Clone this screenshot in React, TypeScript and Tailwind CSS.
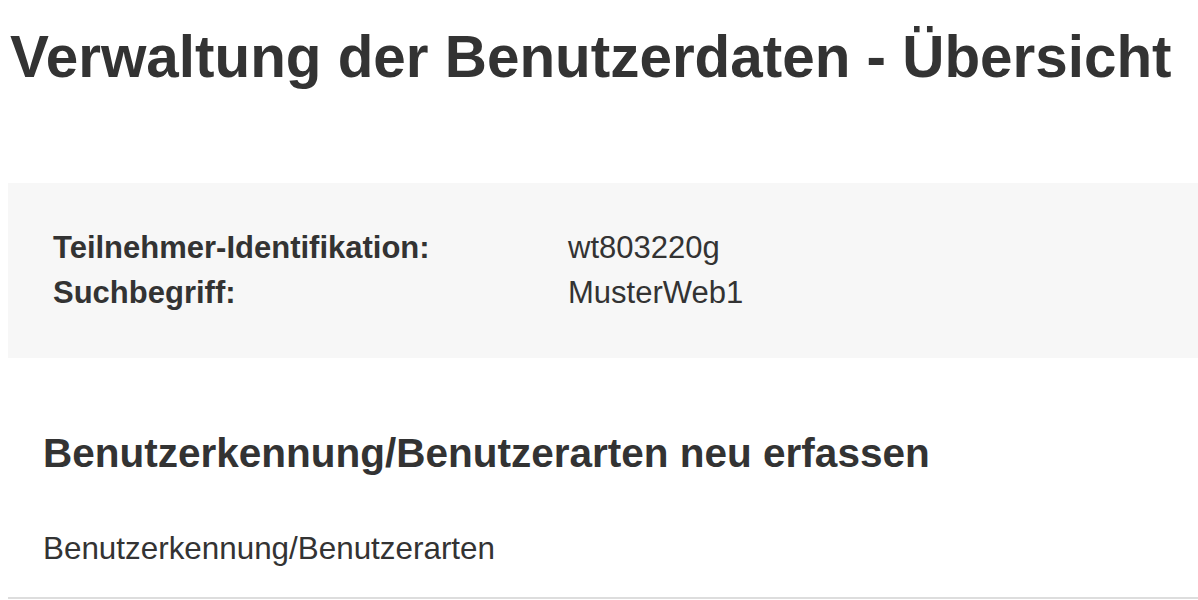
export default function App() {
  return (
    <div
      className="min-h-[600px] bg-white pl-2 text-[#333]"
      style={{ fontFamily: '"Liberation Sans", Arial, sans-serif' }}
    >
      <h1 className="pt-[22px] pl-[2px] text-[58.4px] leading-[70px] font-bold whitespace-nowrap">
        Verwaltung der Benutzerdaten - Übersicht
      </h1>

      <div className="mt-[91px] h-[175px] bg-[#f7f7f7] pl-[45px] pt-[42px]">
        <dl className="grid grid-cols-[515px_1fr] text-[31px] leading-[45px]">
          <dt className="font-bold">Teilnehmer-Identifikation:</dt>
          <dd>wt803220g</dd>
          <dt className="font-bold">Suchbegriff:</dt>
          <dd>MusterWeb1</dd>
        </dl>
      </div>

      <div className="px-[35px] pt-[71px]">
        <h2 className="text-[40.5px] leading-[48px] font-bold whitespace-nowrap">
          Benutzerkennung/Benutzerarten neu erfassen
        </h2>
        <p className="mt-[54px] text-[31.4px] leading-[36px]">Benutzerkennung/Benutzerarten</p>
      </div>
      <div className="mt-[30px] border-t-2 border-[#ddd]" />
    </div>
  );
}
